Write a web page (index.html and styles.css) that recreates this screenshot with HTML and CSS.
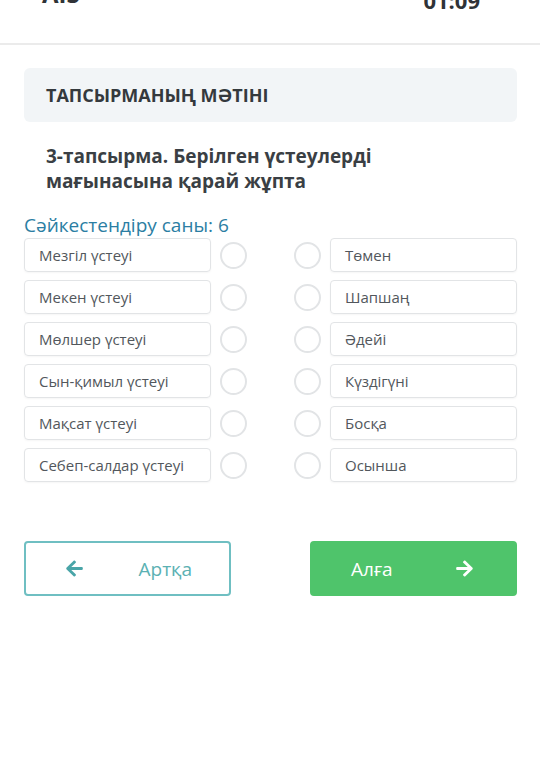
FILE: index.html
```html
<!DOCTYPE html>
<html lang="kk">
<head>
  <meta charset="UTF-8" />
  <meta name="viewport" content="width=device-width, initial-scale=1.0"/>
  <title>Тапсырма</title>
  <link rel="stylesheet" href="styles.css">
</head>
<body>

  <!-- жоғарғы жолақ -->
  <div class="topbar">
    <span class="brand">AIS</span>
    <span class="timer">01:09</span>
  </div>

  <div class="content">
    <div class="task-head">ТАПСЫРМАНЫҢ МӘТІНІ</div>

    <p class="question">3-тапсырма. Берілген үстеулерді мағынасына қарай жұпта</p>

    <div class="count">Сәйкестендіру саны: 6</div>

    <div class="match">
      <div class="item">Мезгіл үстеуі</div>
      <span class="dot"></span><span></span><span class="dot"></span>
      <div class="item">Төмен</div>

      <div class="item">Мекен үстеуі</div>
      <span class="dot"></span><span></span><span class="dot"></span>
      <div class="item">Шапшаң</div>

      <div class="item">Мөлшер үстеуі</div>
      <span class="dot"></span><span></span><span class="dot"></span>
      <div class="item">Әдейі</div>

      <div class="item">Сын-қимыл үстеуі</div>
      <span class="dot"></span><span></span><span class="dot"></span>
      <div class="item">Күздігүні</div>

      <div class="item">Мақсат үстеуі</div>
      <span class="dot"></span><span></span><span class="dot"></span>
      <div class="item">Босқа</div>

      <div class="item">Себеп-салдар үстеуі</div>
      <span class="dot"></span><span></span><span class="dot"></span>
      <div class="item">Осынша</div>
    </div>

    <div class="nav">
      <button class="btn btn-back">
        <svg class="arrow" viewBox="0 0 448 512" width="19" height="19"><path fill="currentColor" d="M257.5 445.1l-22.2 22.2c-9.4 9.4-24.6 9.4-33.900 0L7 273c-9.4-9.4-9.4-24.6 0-33.9L201.4 44.7c9.4-9.4 24.6-9.4 33.9 0l22.2 22.2c9.5 9.5 9.3 25-.4 34.3L136.6 216H424c13.3 0 24 10.7 24 24v32c0 13.3-10.7 24-24 24H136.6l120.5 114.8c9.8 9.3 10 24.8.4 34.3z"/></svg>
        <span>Артқа</span>
      </button>
      <button class="btn btn-next">
        <span>Алға</span>
        <svg class="arrow" viewBox="0 0 448 512" width="19" height="19"><path fill="currentColor" d="M190.5 66.9l22.2-22.2c9.4-9.4 24.6-9.4 33.9 0L441 239c9.4 9.4 9.4 24.6 0 33.9L246.6 467.3c-9.4 9.4-24.6 9.4-33.9 0l-22.2-22.2c-9.5-9.5-9.3-25 .4-34.3L311.4 296H24c-13.3 0-24-10.7-24-24v-32c0-13.3 10.7-24 24-24h287.4L190.9 101.2c-9.8-9.3-10-24.8-.4-34.3z"/></svg>
      </button>
    </div>
  </div>

</body>
</html>
```

FILE: styles.css
```css
* {
  box-sizing: border-box;
}

body {
  margin: 0;
  background: #fff;
  font-family: 'Open Sans', 'Noto Sans', sans-serif;
  color: #3a3f44;
}

.topbar {
  height: 45px;
  border-bottom: 2px solid #ebebeb;
  display: flex;
  justify-content: space-between;
  align-items: flex-start;
  padding: 0 60px 0 42px;
  overflow: hidden;
}

.brand {
  font-size: 24px;
  font-weight: 700;
  line-height: 1;
  margin-top: -18px;
  color: #2f3337;
}

.timer {
  font-size: 22px;
  font-weight: 700;
  line-height: 1;
  margin-top: -11px;
  color: #2f3337;
}

.content {
  padding: 23px 23px 0 24px;
}

.task-head {
  background: #f2f5f7;
  border-radius: 6px;
  height: 54px;
  padding: 0 22px;
  display: flex;
  align-items: center;
  font-size: 18px;
  font-weight: 700;
  color: #34393d;
}

.question {
  margin: 22px 0 0;
  padding: 0 22px;
  font-size: 19px;
  font-weight: 700;
  line-height: 25px;
  color: #3a3f44;
}

.count {
  margin-top: 18px;
  font-size: 19px;
  line-height: 26px;
  color: #2b7ea3;
}

.match {
  display: grid;
  grid-template-columns: 187px 27px 1fr 27px 187px;
  column-gap: 9px;
  row-gap: 8px;
  align-items: center;
}

.item {
  height: 34px;
  border: 1px solid #e2e4e6;
  border-radius: 4px;
  padding: 0 14px;
  display: flex;
  align-items: center;
  font-size: 15px;
  color: #52575c;
  white-space: nowrap;
  box-shadow: 0 1px 2px rgba(0, 0, 0, 0.04);
}

.dot {
  width: 27px;
  height: 27px;
  border: 2px solid #e2e4e6;
  border-radius: 50%;
}

.nav {
  margin-top: 59px;
  display: flex;
  justify-content: space-between;
}

.btn {
  width: 207px;
  height: 55px;
  border-radius: 4px;
  display: flex;
  justify-content: space-between;
  align-items: center;
  padding: 0 41px 0 39px;
  font-family: inherit;
  font-size: 19px;
  cursor: pointer;
}

.btn-back {
  background: #fff;
  border: 2px solid #6fbfc2;
  color: #5bb1b3;
}

.btn-back .arrow {
  color: #4aa5a8;
}

.btn-back span {
  margin-right: -4px;
}

.btn-next {
  background: #4fc46b;
  border: 2px solid #4fc46b;
  color: #fff;
}

.arrow {
  display: block;
}
```
